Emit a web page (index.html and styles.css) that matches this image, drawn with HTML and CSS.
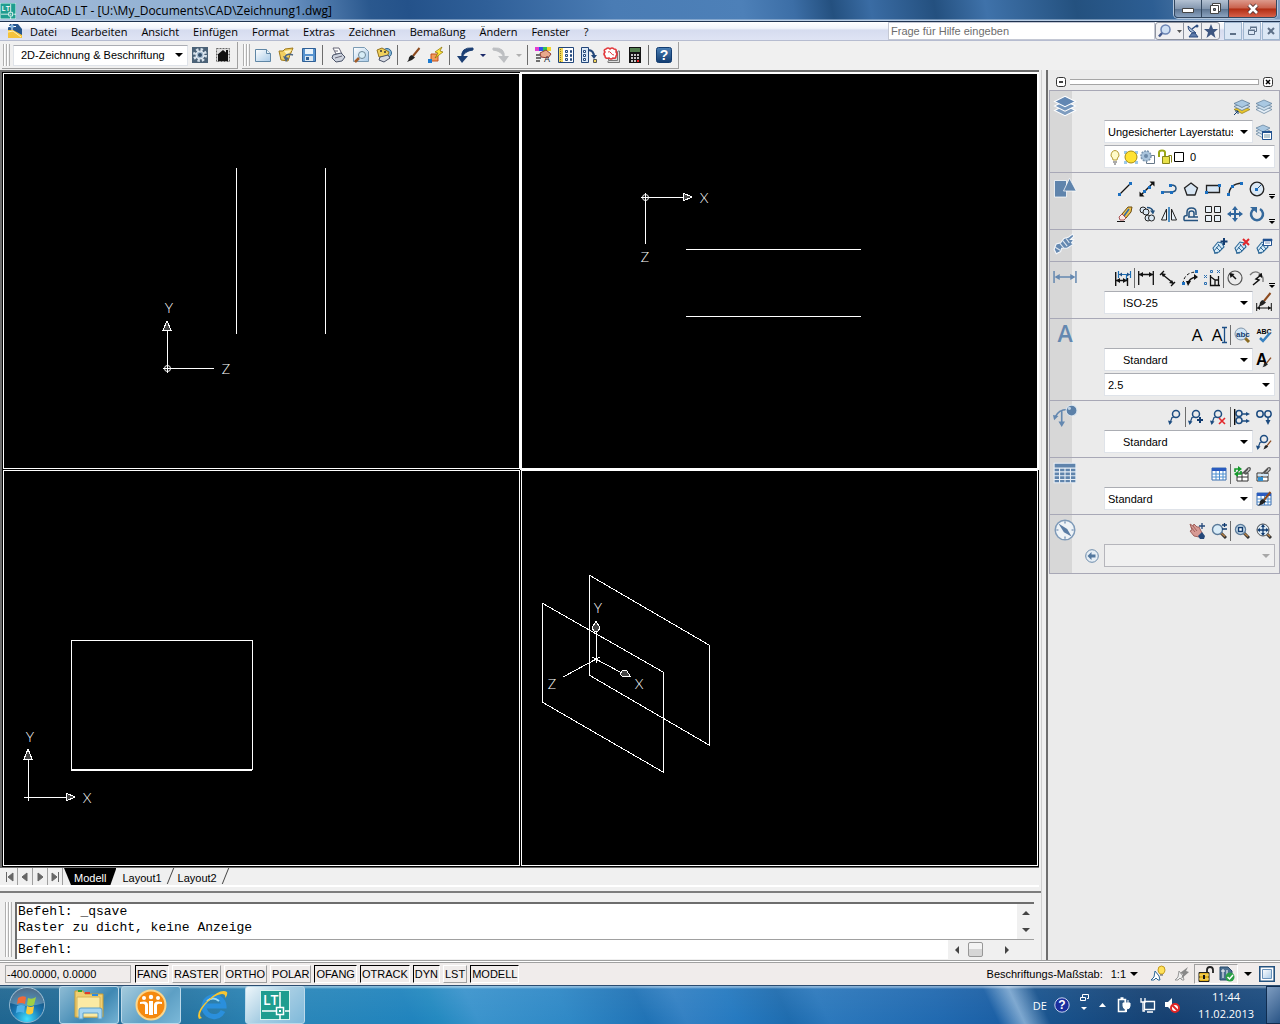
FILE: index.html
```html
<!DOCTYPE html>
<html lang="de">
<head>
  <meta charset="UTF-8">
  <meta name="viewport" content="width=device-width, initial-scale=1.0">
  <title>AutoCAD LT - Zeichnung1.dwg</title>
  <link rel="stylesheet" href="styles.css">
</head>
<body>
  <!-- shared icon parts -->
  <svg class="defs" aria-hidden="true">
    <defs>
      <linearGradient id="paper" x1="0" y1="0" x2="1" y2="1"><stop offset="0" stop-color="#fff"/><stop offset="1" stop-color="#a9cbe8"/></linearGradient>
      <radialGradient id="orb" cx=".5" cy=".9" r=".9"><stop offset="0" stop-color="#3fe0ff"/><stop offset=".45" stop-color="#1a78b4"/><stop offset="1" stop-color="#12385c"/></radialGradient>
      <linearGradient id="steel" x1="0" y1="0" x2="0" y2="1"><stop offset="0" stop-color="#4a7fb5"/><stop offset="1" stop-color="#123c70"/></linearGradient>
      <symbol id="layers" viewBox="0 0 16 16">
        <path d="M8 7.5 15 11 8 14.5 1 11z" fill="#7f9dbf" stroke="#fff" stroke-width=".7"/>
        <path d="M8 4.5 15 8 8 11.500 1 8z" fill="#7496bd" stroke="#fff" stroke-width=".7"/>
        <path d="M8 1.500 15 5 8 8.500 1 5z" fill="#6287b3" stroke="#fff" stroke-width=".7"/>
      </symbol>
      <symbol id="leader" viewBox="0 0 16 16">
        <circle cx="10" cy="5" r="3.500" fill="none" stroke="#1d4c80" stroke-width="1.500"/>
        <path d="M8 8 6 8.500 4 14" fill="none" stroke="#1d4c80" stroke-width="1.200"/>
        <path d="M2 11.500 6.500 12.500 3.500 16z" fill="#1d4c80"/>
      </symbol>
      <symbol id="lens" viewBox="0 0 16 16">
        <path d="M10 10 15 15" stroke="#333" stroke-width="3"/>
        <path d="M10 10 14 13.500" stroke="#b98347" stroke-width="1.500"/>
        <circle cx="6.500" cy="6.500" r="5" fill="#d9ecf8" stroke="#5b7a99" stroke-width="1.400"/>
      </symbol>
      <symbol id="brush" viewBox="0 0 16 16">
        <path d="M14.500 1 8 9" stroke="#8c4a1e" stroke-width="2"/>
        <path d="M7 8 10 10.500Q7 14 2 15 4 13 4 10.500 5 8 7 8z" fill="#222"/>
      </symbol>
      <symbol id="leaf" viewBox="0 0 16 16">
        <path d="M1 10l5-6 4 1 2 4-5 5-4 1z" fill="#d7ebf8" stroke="#2c6796" stroke-width="1.100"/>
        <path d="M2 13l5-6M4 9l4 4M6 6l4 5M2 15h4" stroke="#2c6796"/>
      </symbol>
      <symbol id="grid" viewBox="0 0 16 16">
        <path d="M1 2h14v12H1z" fill="#fff" stroke="#3a6eb0"/>
        <path d="M1 2h14v3H1z" fill="#2a5bbf"/>
        <path d="M1 8h14M1 11h14M5 5v9M8.500 5v9M12 5v9" stroke="#4c8fd0"/>
      </symbol>
      <symbol id="clip" viewBox="0 0 16 16">
        <path d="M1 7h11v8H1zM1 11h11M6 7v8" fill="#fff" stroke="#333"/>
        <path d="M7 7 12 2q3-1 2 2l-4 4q-2 0-1-2l3-3" fill="none" stroke="#555" stroke-width="1.300"/>
      </symbol>
      <symbol id="ltlogo" viewBox="0 0 30 30">
        <path d="M0 0h30v30H0z" fill="#1f9d8f"/>
        <path d="M0 0h30v30H0z" fill="none" stroke="#d9f5f0" stroke-width="2"/>
        <path d="M20 2v15M2 21h15M20 25v5M25 21h5M16.500 17.500h7v7h-7z" fill="none" stroke="#fff" stroke-width="1.500"/>
        <path d="M19 20h2v2h-2z" fill="#fff"/>
        <text x="3" y="15" font-size="14" font-family="Open Sans, sans-serif" font-weight="600" fill="#fff">LT</text>
      </symbol>
    </defs>
  </svg>

  <header class="titlebar">
    <svg class="app-icon" viewBox="0 0 30 30" aria-hidden="true"><use href="#ltlogo"/></svg>
    <h1 class="title">AutoCAD LT - [U:\My_Documents\CAD\Zeichnung1.dwg]</h1>
    <div class="window-buttons">
      <button class="win-btn" aria-label="Minimieren"><svg width="14" height="12"><path d="M1.500 5.500h11v4h-11z" fill="#fff" stroke="#444"/></svg></button>
      <button class="win-btn" aria-label="Wiederherstellen"><svg width="14" height="14"><path d="M4.500 1.500h8v8h-8z" fill="#fff" stroke="#444"/><path d="M2.500 3.500h8v8h-8z" fill="#fff" stroke="#444"/><path d="M5.500 6.500h2v2h-2z" fill="#6d87a8" stroke="#444"/></svg></button>
      <button class="win-btn win-close" aria-label="Schließen"><svg width="14" height="12"><path d="M3 2 11 10M11 2 3 10" stroke="#533" stroke-width="4.500"/><path d="M3 2 11 10M11 2 3 10" stroke="#fff" stroke-width="2.600"/></svg></button>
    </div>
  </header>

  <nav class="menubar">
    <svg class="doc-icon" width="16" height="16" aria-hidden="true"><path d="M3 1h8l4 5v9H1V5z" fill="#24548c"/><path d="M1 7l5 0 9 5v3H1z" fill="#f5c33b"/><path d="M1 9l5-1 8 6" fill="none" stroke="#fff2b8"/><path d="M5 0v7M1 3.500h8" stroke="#fff"/><path d="M3.500 2h3v3h-3z" fill="#7fb4e0"/></svg>
    <button class="menu">Datei</button>
    <button class="menu">Bearbeiten</button>
    <button class="menu">Ansicht</button>
    <button class="menu">Einfügen</button>
    <button class="menu">Format</button>
    <button class="menu">Extras</button>
    <button class="menu">Zeichnen</button>
    <button class="menu">Bemaßung</button>
    <button class="menu">Ändern</button>
    <button class="menu">Fenster</button>
    <button class="menu">?</button>
    <input class="help-input" type="text" placeholder="Frage für Hilfe eingeben" aria-label="Frage für Hilfe eingeben">
    <div class="help-buttons">
      <button class="help-btn help-wide" aria-label="Suchen"><svg width="26" height="14"><path d="M6 8 2 12.500" stroke="#44588c" stroke-width="2.500"/><circle cx="8.500" cy="5.500" r="4.500" fill="#cfe0f4" stroke="#6b84b4" stroke-width="1.500"/><path d="M20 6h5l-2.500 3z" fill="#555"/></svg></button>
      <button class="help-btn" aria-label="Kommunikations-Center"><svg width="14" height="14"><path d="M2 2q0 7 8 7z" fill="#a8bdd8" stroke="#2d4d80"/><path d="M6 5l4-3" stroke="#2d4d80" stroke-width="1.500"/><circle cx="11" cy="2" r="1.500" fill="#2d4d80"/><path d="M6 9l-3 4h9l-3-4z" fill="#5d7bab" stroke="#2d4d80"/></svg></button>
      <button class="help-btn" aria-label="Favoriten"><svg width="14" height="14"><path d="M7 0l2 5h5l-4 3.500 1.500 5.500L7 10.500 2.500 14 4 8.500 0 5h5z" fill="#3d5580"/></svg></button>
    </div>
    <div class="doc-buttons">
      <button class="doc-btn" aria-label="Zeichnung minimieren"><svg width="12" height="12"><path d="M3 9h6" stroke="#5d7088" stroke-width="2"/></svg></button>
      <button class="doc-btn" aria-label="Zeichnung wiederherstellen"><svg width="12" height="12"><path d="M4.500 4V2.500h6v4H9M2.500 5.500h6v4h-6zM4 2h7M2 5h7" fill="none" stroke="#5d7088"/></svg></button>
      <button class="doc-btn" aria-label="Zeichnung schließen"><svg width="12" height="12"><path d="M3 3l6 6M9 3 3 9" stroke="#5d7088" stroke-width="2"/></svg></button>
    </div>
  </nav>

  <div class="toolbars">
    <div class="toolbar">
      <span class="grip"></span>
      <span class="combo combo-workspace"><select aria-label="Arbeitsbereich"><option>2D-Zeichnung &amp; Beschriftung</option></select></span>
      <button class="tool" aria-label="Einstellungen"><svg width="16" height="16"><path d="M0 0h16v16H0z" fill="#4b6277"/><circle cx="8" cy="8" r="5.500" fill="none" stroke="#d7e2ec" stroke-width="3" stroke-dasharray="2.300 2"/><circle cx="8" cy="8" r="4" fill="#a8bed2" stroke="#e8eef4"/><circle cx="8" cy="8" r="2" fill="#34506c"/></svg></button>
      <button class="tool" aria-label="Mein Arbeitsbereich"><svg width="16" height="16"><path d="M1.500 1.500h13v13h-13z" fill="#ddd" stroke="#666" stroke-dasharray="2 1"/><path d="M8 3l6 5h-1v6H3V8H2zM11 3h2v4h-2z" fill="#111"/></svg></button>
    </div>
    <div class="toolbar">
      <span class="grip"></span>
      <button class="tool" aria-label="Neu"><svg width="16" height="16"><path d="M.5 2.500h11l4 4v8H.5z" fill="url(#paper)" stroke="#5f86a5"/><path d="M11.500 2.500v4h4" fill="#e9f3fa" stroke="#5f86a5"/></svg></button>
      <button class="tool" aria-label="Öffnen"><svg width="16" height="16"><path d="M1 4l4 0 2-2 8-1-3 7-2 6-7-1z" fill="#f2cf60" stroke="#a07a1c"/><path d="M6 4l8-1-5 5z" fill="#fff3bd"/><path d="M15 8q-6-2-8 2" fill="none" stroke="#4d6785" stroke-width="1.500"/><path d="M5 9l6 2-3 4z" fill="#4d6785"/></svg></button>
      <button class="tool" aria-label="Speichern"><svg width="16" height="16"><path d="M1.500 1.500h13v13h-13z" fill="#5793cf" stroke="#2f5f95"/><path d="M4 2h8v5H4z" fill="#e9f3fb"/><path d="M4 9h8v5H4z" fill="#dbe7f1"/><path d="M5 10h3v3H5z" fill="#2f5f95"/></svg></button>
      <span class="sep"></span>
      <button class="tool" aria-label="Plotten"><svg width="16" height="16"><path d="M3 1h6l3 6H6z" fill="#fff" stroke="#667"/><path d="M3 8l8-2 4 4-3 4-6 1-4-4z" fill="#cdd3de" stroke="#4a5368"/><path d="M5 11l7-2M5 4h3" stroke="#667"/></svg></button>
      <button class="tool" aria-label="Plot-Voransicht"><svg width="16" height="16"><path d="M.5.500h11l4 4v10H.5z" fill="url(#paper)" stroke="#7b9bb4"/><path d="M6 11l-4 4" stroke="#a35c28" stroke-width="2.500"/><circle cx="9" cy="8" r="3.500" fill="#d7edf7" stroke="#6d8797"/></svg></button>
      <button class="tool" aria-label="Publizieren"><svg width="16" height="16"><circle cx="11" cy="6" r="4.500" fill="#86b9d9" stroke="#30658e"/><path d="M1 3l5-2 7 4-2 5-8 0z" fill="#efd05c" stroke="#95731d"/><path d="M4 10l8-2 2 3-6 4-5-2z" fill="#d5d9e2" stroke="#4a5368"/><path d="M4 4h2M8 5h2" stroke="#333" stroke-width="1.500"/></svg></button>
      <span class="sep"></span>
      <button class="tool" aria-label="Eigenschaften anpassen"><svg width="16" height="16"><use href="#brush"/></svg></button>
      <button class="tool" aria-label="Blockeditor"><svg width="16" height="16"><path d="M3 7h7v7H3z" fill="#f19a5b" stroke="#c2501e"/><path d="M14 0 7 5l3 1-3 5 8-6-3-1z" fill="#ffe93d" stroke="#8a6f00" stroke-width=".7"/><path d="M0 12h4v4H0z" fill="#1b7bd1"/></svg></button>
      <span class="sep"></span>
      <button class="tool" aria-label="Zurück"><svg width="16" height="16"><path d="M16 1Q3 0 5 11 7 4 16 3z" fill="#1c3f73" stroke="#1c3f73"/><path d="M0 9h11l-6 7z" fill="#1c3f73"/></svg></button>
      <button class="drop" aria-label="Zurück-Liste"></button>
      <button class="tool" aria-label="Wiederherstellen" disabled><svg width="16" height="16"><path d="M0 1q13-1 11 10Q9 4 0 3z" fill="#bdbfc2" stroke="#bdbfc2"/><path d="M16 9H5l6 7z" fill="#bdbfc2"/></svg></button>
      <button class="drop" aria-label="Wiederherstellen-Liste" disabled></button>
      <span class="sep"></span>
      <button class="tool" aria-label="Eigenschaften"><svg width="16" height="16"><path d="M0 0h4v4H0z" fill="#e23bd2"/><path d="M4 0h4v4H4z" fill="#2f52e8"/><path d="M8 0h4v4H8z" fill="#2fc25b"/><path d="M12 0h4v4h-4z" fill="#f4d52c"/><path d="M5 6l6-3 5 4-3 4-7-1z" fill="#e9a98d" stroke="#8f3b35"/><path d="M1 8h4M1 11h5M1 14h4" stroke="#444" stroke-width="1.500"/><text x="9" y="15" font-size="9" font-family="Liberation Sans, sans-serif" fill="#123">A</text></svg></button>
      <button class="tool" aria-label="DesignCenter"><svg width="16" height="16"><path d="M.5.5h15v15H.5z" fill="#fff" stroke="#22467a"/><path d="M1 1h4v14H1z" fill="#f3d758"/><path d="M2.500 2v13" stroke="#927a1a" stroke-dasharray="1 1"/><path d="M7.500 3.500h2v2h-2zM12.500 3.500h1v2h-1zM7.500 7.500h2v2h-2zM12.500 7.500h1v2h-1zM7.500 11.500h2v2h-2zM12.500 11.500h1v2h-1z" fill="#dfeaf6" stroke="#22467a"/></svg></button>
      <button class="tool" aria-label="Werkzeugpaletten"><svg width="16" height="16"><path d="M.5.500h7v15h-7z" fill="#dce9f6" stroke="#22467a"/><path d="M2.500 3.500h2v2h-2zM2.500 7.500h2v2h-2zM2.500 11.500h2v2h-2z" fill="#fff" stroke="#22467a"/><path d="M7 3q6 0 6 7" fill="none" stroke="#22467a" stroke-width="2"/><path d="M10 8h6l-3 4z" fill="#22467a"/><path d="M12.500 12.500h3v3h-3z" fill="#f3d758" stroke="#555"/></svg></button>
      <button class="tool" aria-label="Markierungssatz-Manager"><svg width="16" height="16"><path d="M4.500 4.500h9v9h-9zM14 4h1.500v11.500H4V14" fill="#ddd" stroke="#777"/><path d="M2 2q2-2 4 0 2-2 4 0 3 0 2 3 2 2 0 4 0 3-3 2-2 2-4 0-4 1-4-2-2-2 0-4-2-2 1-3z" fill="#fff" stroke="#e2393d" stroke-width="1.600"/><path d="M4 5q2-1 3 1t3 2" fill="none" stroke="#e2393d"/></svg></button>
      <button class="tool" aria-label="Taschenrechner"><svg width="16" height="16"><path d="M2 0h12v16H2z" fill="#141414"/><path d="M3 1h10v4H3z" fill="#54804f"/><path d="M4 8h8M4 11h8M4 14h8" stroke="#fff" stroke-width="1.500" stroke-dasharray="2 1"/><path d="M10 14h2" stroke="#e22" stroke-width="2"/></svg></button>
      <span class="sep"></span>
      <button class="tool" aria-label="Hilfe"><svg width="16" height="16"><rect x=".5" y=".5" width="15" height="15" rx="2" fill="url(#steel)" stroke="#123c70"/><text x="8" y="13" font-size="14" font-weight="bold" font-family="Liberation Sans, sans-serif" text-anchor="middle" fill="#fff">?</text></svg></button>
    </div>
  </div>

  <main class="workspace">
    <div class="document">
      <div class="drawing">
        <div class="viewport">
          <svg role="img" aria-label="Seitenansicht">
            <path d="M232 94v166M321 94v166M163 299V256M159 294h51"/>
            <path class="arrow" d="M163 247l4 9h-8z"/>
            <circle class="origin" cx="163.500" cy="294.500" r="3"/>
            <text x="165" y="239">Y</text><text x="222" y="300">Z</text>
          </svg>
        </div>
        <div class="viewport active">
          <svg role="img" aria-label="Ansicht von oben">
            <path d="M164 175h175M164 242h175M119 123h43M123 119v51"/>
            <path class="arrow" d="M170 123l-9-4v8z"/>
            <circle class="origin" cx="123.500" cy="123.500" r="3"/>
            <text x="182" y="129">X</text><text x="123" y="188">Z</text>
          </svg>
        </div>
        <div class="viewport">
          <svg role="img" aria-label="Vorderansicht">
            <path d="M67 169h181v129H67zM67 299h181M20 326h42M24 330V288"/>
            <path class="arrow" d="M24 278l4 10h-8zM71 326l-9-4v8z"/>
            <text x="26" y="271">Y</text><text x="83" y="332">X</text>
          </svg>
        </div>
        <div class="viewport">
          <svg role="img" aria-label="Isometrische Ansicht">
            <path d="M67 104l120 70v100l-120-70zM20 132l121 69v100L20 231zM74 192V160M41 206l37-20M70 186l28 15"/>
            <path class="arrow" d="M74 150l4 7-2 3h-4l-2-3zM98 203l3-4 4 1 3 5h-8z"/>
            <text x="76" y="142">Y</text><text x="30" y="218">Z</text><text x="117" y="218">X</text>
          </svg>
        </div>
      </div>

      <div class="tabs">
        <button class="tab-nav" aria-label="Erster"><svg width="10" height="10"><path d="M1.500 0v10M8 1v8L3 5z"/></svg></button>
        <button class="tab-nav" aria-label="Vorheriger"><svg width="10" height="10"><path d="M7 1v8L2 5z"/></svg></button>
        <button class="tab-nav" aria-label="Nächster"><svg width="10" height="10"><path d="M3 1v8l5-4z"/></svg></button>
        <button class="tab-nav" aria-label="Letzter"><svg width="10" height="10"><path d="M8.500 0v10M2 1v8l5-4z"/></svg></button>
        <button class="tab tab-active">Modell</button>
        <button class="tab">Layout1</button>
        <button class="tab">Layout2</button>
      </div>

      <section class="command" aria-label="Befehlszeile">
        <span class="grip"></span>
        <div class="command-box">
          <div class="history">
            <div class="history-text">
              <p>Befehl: _qsave</p>
              <p>Raster zu dicht, keine Anzeige</p>
            </div>
            <div class="vscroll">
              <button aria-label="Nach oben"><svg width="8" height="4"><path d="M0 4h8L4 0z"/></svg></button>
              <button aria-label="Nach unten"><svg width="8" height="4"><path d="M0 0h8L4 4z"/></svg></button>
            </div>
          </div>
          <div class="prompt">
            <label for="befehl">Befehl:</label>
            <input type="text" id="befehl">
            <div class="hscroll">
              <button aria-label="Nach links"><svg width="4" height="8"><path d="M4 0v8L0 4z"/></svg></button>
              <span class="thumb"></span>
              <button aria-label="Nach rechts"><svg width="4" height="8"><path d="M0 0v8l4-4z"/></svg></button>
            </div>
          </div>
        </div>
      </section>
    </div>

    <aside class="palette">
      <div class="palette-head">
        <button class="round-btn" aria-label="Einklappen"><svg width="10" height="10"><rect x=".5" y=".5" width="9" height="9" rx="2" fill="#fff" stroke="#333"/><path d="M3 5h4" stroke="#000" stroke-width="1.500"/></svg></button>
        <span class="palette-grip"></span>
        <button class="round-btn" aria-label="Schließen"><svg width="10" height="10"><rect x=".5" y=".5" width="9" height="9" rx="2" fill="#fff" stroke="#333"/><path d="M3 3l4 4M7 3 3 7" stroke="#000" stroke-width="1.500"/></svg></button>
      </div>

      <div class="panels">
        <section class="panel" aria-label="Layer">
          <svg class="panel-icon" viewBox="0 0 16 16"><use href="#layers"/></svg>
          <div class="panel-rows">
            <div class="row">
              <button class="pbtn" aria-label="Objektlayer als aktuell"><svg width="16" height="16"><path d="M8 7l8 3.500-8 4-8-4z" fill="#e8c52c" stroke="#8e7a18" stroke-width=".7"/><path d="M8 4l8 3.500-8 4-8-4z" fill="#cfe0ee" stroke="#4f6f8c" stroke-width=".7"/><path d="M8 1l8 3.500-8 4-8-4z" fill="#a9c8e2" stroke="#4f6f8c" stroke-width=".7"/><path d="M0 16l4-4M1 12h3v3" fill="none" stroke="#123c70"/></svg></button>
              <button class="pbtn" aria-label="Layer vorher"><svg width="16" height="16"><path d="M8 7l8 3.500-8 4-8-4z" fill="#e4eef6" stroke="#5f7c98" stroke-width=".7"/><path d="M8 4l8 3.500-8 4-8-4z" fill="#cfe0ee" stroke="#5f7c98" stroke-width=".7"/><path d="M8 1l8 3.500-8 4-8-4z" fill="#a9c8e2" stroke="#5f7c98" stroke-width=".7"/></svg></button>
            </div>
            <div class="row">
              <span class="combo"><select aria-label="Layerstatus"><option>Ungesicherter Layerstatus</option></select></span>
              <button class="pbtn" aria-label="Layereigenschaften"><svg width="16" height="16"><path d="M7 7l7 3-7 4-7-4z" fill="#e4eef6" stroke="#5f7c98" stroke-width=".7"/><path d="M7 4l7 3-7 4-7-4z" fill="#cfe0ee" stroke="#5f7c98" stroke-width=".7"/><path d="M7 1l7 3-7 4-7-4z" fill="#a9c8e2" stroke="#5f7c98" stroke-width=".7"/><path d="M6.500 7.500h9v8h-9z" fill="#fff" stroke="#225390"/><path d="M6 7h10v2H6z" fill="#225390"/><path d="M8 11h6M8 13h6" stroke="#79a"/></svg></button>
            </div>
            <div class="row">
              <span class="combo combo-layer">
                <svg width="76" height="16" aria-hidden="true">
                  <path d="M5 11q0-2-2-4 0-5 4-5.500 4 .500 4 5.500-2 2-2 4z" fill="#fffbc8" stroke="#b49a32"/><path d="M5 13h4M6 15h2" stroke="#555"/>
                  <path d="M16 2h3v3h-3zM27 2h3v3h-3zM16 12h3v3h-3zM27 12h3v3h-3z" fill="#9cc9ec"/><circle cx="23" cy="8" r="6" fill="#ffe233" stroke="#a88c10"/>
                  <path d="M38.500 6.500h8v8h-8z" fill="#fff" stroke="#678"/><circle cx="38" cy="7" r="5" fill="#a9c4dc" stroke="#7b96b0" stroke-width="1.500" stroke-dasharray="2 1"/><circle cx="38" cy="7" r="2" fill="#6b89a8"/>
                  <path d="M51 8V3.500q0-2 3-2t3 2V7" fill="none" stroke="#9aa615" stroke-width="2"/><path d="M54.500 7.500h7v7h-7z" fill="#e8e14a" stroke="#86841a"/><path d="M60.500 6.500h3v7" fill="none" stroke="#86841a"/>
                  <path d="M66.500 3.500h9v9h-9z" fill="#fff" stroke="#000"/>
                </svg>
                <select aria-label="Layer"><option>0</option></select>
              </span>
            </div>
          </div>
        </section>

        <section class="panel" aria-label="2D-Zeichnung">
          <svg class="panel-icon" viewBox="0 0 16 16"><path d="M1 3h8v11H1z" fill="#5f84ac" stroke="#fff" stroke-width=".5"/><path d="M11 1.500 15.500 10H7z" fill="#5f84ac" stroke="#fff" stroke-width=".5"/></svg>
          <div class="panel-rows">
            <div class="row">
              <button class="pbtn" aria-label="Linie"><svg width="16" height="16"><path d="M2 14 14 2" stroke="#111" stroke-width="1.300"/><path class="node" d="M1 12h3v3H1zM12 1h3v3h-3z"/></svg></button>
              <button class="pbtn" aria-label="Konstruktionslinie"><svg width="16" height="16"><path d="M2 14 14 2" stroke="#111" stroke-width="1.500"/><path d="M15.500 .5v5l-5-5zM.5 15.500v-5l5 5z" fill="#111"/><path class="node" d="M4 9h3v3H4zM9 5h3v3H9z"/></svg></button>
              <button class="pbtn" aria-label="Polylinie"><svg width="16" height="16"><path d="M1 11h9q5 0 5-3.500T10 4" fill="none" stroke="#24527f" stroke-width="1.500"/><path class="node" d="M0 10h3v3H0zM9 10h3v3H9zM8 3h3v3H8z"/></svg></button>
              <button class="pbtn" aria-label="Polygon"><svg width="16" height="16"><path d="M8 2l6.500 5-2.500 7H4L1.500 7z" fill="#d8e6f3" stroke="#222" stroke-width="1.300"/></svg></button>
              <button class="pbtn" aria-label="Rechteck"><svg width="16" height="16"><path d="M1.500 4.500h13v7h-13z" fill="#d8e6f3" stroke="#222" stroke-width="1.300"/><path class="node" d="M0 10h3v3H0zM13 3h3v3h-3z"/></svg></button>
              <button class="pbtn" aria-label="Bogen"><svg width="16" height="16"><path d="M2 14Q2 3 15 2" fill="none" stroke="#222" stroke-width="1.300"/><path class="node" d="M0 12h3v3H0zM4 4h3v3H4zM13 1h3v3h-3z"/></svg></button>
              <button class="pbtn" aria-label="Kreis"><svg width="16" height="16"><circle cx="8" cy="8" r="6.800" fill="#dbe8f4" stroke="#222" stroke-width="1.300"/><path d="M8 8l4-4" stroke="#24527f"/><path class="node" d="M6 7h3v3H6z"/></svg></button>
              <button class="more" aria-label="Weitere Zeichenbefehle"></button>
            </div>
            <div class="row">
              <button class="pbtn" aria-label="Löschen"><svg width="16" height="16"><path d="M11 1h4l-1 5-5 6-4-4z" fill="#efc04a" stroke="#6b4d10"/><path d="M12 3l-5 7" stroke="#2d6cb0" stroke-width="1.500"/><path d="M5 8l4 4-2 2H3l-1-3z" fill="#fbe9e4" stroke="#a55"/><path d="M0 15.500h8" stroke="#111"/></svg></button>
              <button class="pbtn" aria-label="Kopieren"><svg width="16" height="16"><g fill="#dbe8f4" stroke="#222"><circle cx="4" cy="4" r="3"/><circle cx="7" cy="6" r="3"/><circle cx="9" cy="12" r="3"/><circle cx="12.500" cy="12" r="3"/></g><path d="M8 1.500q5 0 6 4" fill="none" stroke="#24527f" stroke-width="1.500"/><path d="M11 4.500h5l-2 4z" fill="#24527f"/></svg></button>
              <button class="pbtn" aria-label="Spiegeln"><svg width="16" height="16"><path d="M5.500 3v11H.5zM10.500 3v11h5z" fill="#e9f1f8" stroke="#222"/><path d="M8 1v15" stroke="#1b6fb5" stroke-width="1.500"/></svg></button>
              <button class="pbtn" aria-label="Versetzen"><svg width="16" height="16"><path d="M1 14.500h14M1 14.500v-3q0-2 3-2V6q0-4 4.500-4T13 6v3M5 11h10M6 11V7q0-2 2.500-2T11 7v4" fill="none" stroke="#24527f" stroke-width="1.500"/></svg></button>
              <button class="pbtn" aria-label="Reihe"><svg width="16" height="16"><path d="M.5.500h6v6h-6zM9.500.500h6v6h-6zM.5 9.500h6v6h-6zM9.500 9.500h6v6h-6z" fill="#e9f1f8" stroke="#222"/></svg></button>
              <button class="pbtn" aria-label="Schieben"><svg width="16" height="16"><path d="M8 2v12M2 8h12" stroke="#2f659c" stroke-width="2"/><path d="M8 0l3 4H5zM8 16l3-4H5zM0 8l4-3v6zM16 8l-4-3v6z" fill="#2f659c"/></svg></button>
              <button class="pbtn" aria-label="Drehen"><svg width="16" height="16"><path d="M5 3A6 6 0 1 0 11 3" fill="none" stroke="#35699c" stroke-width="2.500"/><path d="M1 1h7v6z" fill="#35699c"/></svg></button>
              <button class="more" aria-label="Weitere Änderungsbefehle"></button>
            </div>
          </div>
        </section>

        <section class="panel" aria-label="Beschriftungs-Skalierung">
          <svg class="panel-icon" viewBox="0 0 22 22"><path d="M1 15l2-5 4-1 3-4 4-1 4-3 1 2-3 3 3 0-2 3 2 1-3 2-3 2-5 0-1 3-4 2z" fill="#6488b0" stroke="#f4f7fa"/><path d="M2 13l5 3M6 9l4 5M9 7l4 5M12 5l3 4" stroke="#dfe8f1"/></svg>
          <div class="panel-rows">
            <div class="row">
              <button class="pbtn" aria-label="Maßstab hinzufügen"><svg width="16" height="16"><use href="#leaf"/><path d="M12 0v7M8.500 3.500h7" stroke="#123c70" stroke-width="2"/></svg></button>
              <button class="pbtn" aria-label="Maßstab löschen"><svg width="16" height="16"><use href="#leaf"/><path d="M9 1l6 6M15 1 9 7" stroke="#e2262a" stroke-width="2"/></svg></button>
              <button class="pbtn" aria-label="Maßstabsliste"><svg width="16" height="16"><use href="#leaf"/><path d="M7.500 1.500h8v6h-8z" fill="#fff" stroke="#225390"/><path d="M7 1h9v2H7zM9 5h5" fill="#225390" stroke="#225390" stroke-width=".6"/></svg></button>
            </div>
          </div>
        </section>

        <section class="panel" aria-label="Bemaßungen">
          <svg class="panel-icon" viewBox="0 0 16 16"><path d="M.7 4v8M15.300 4v8M2 8h12" stroke="#6488b0"/><path d="M1 8l3.500-2v4zM15 8l-3.500-2v4z" fill="#6488b0"/></svg>
          <div class="panel-rows">
            <div class="row">
              <button class="pbtn" aria-label="Schnellbemaßung"><svg width="16" height="16"><path d="M3.500 1v7M15.500 1v7M3.500 4.500h12M11.500 5v6" stroke="#1c6fb6" stroke-width="1.200"/><path d="M4 4.500l3-2v4zM15 4.500l-3-2v4z" fill="#1c4f86"/><path d="M.7 2v14M12.500 8v8M1 10.500h12" stroke="#111" stroke-width="1.400"/><path d="M1 10.500l4-2.500v5zM12 10.500l-4-2.500v5z" fill="#111"/></svg></button>
              <span class="sep"></span>
              <button class="pbtn" aria-label="Linear"><svg width="16" height="16"><path d="M.7 1v14M15.300 1v14M1 4.500h14" stroke="#111" stroke-width="1.300"/><path d="M1 4.500l4-2.500v5zM15 4.500l-4-2.500v5z" fill="#111"/></svg></button>
              <button class="pbtn" aria-label="Ausgerichtet"><svg width="16" height="16"><path d="M0 5l4-4M11 16l4-4M2 4l11 9" stroke="#111" stroke-width="1.300"/><path d="M1 3l5 1-3 3zM14 14l-5-1 3-3z" fill="#111"/></svg></button>
              <button class="pbtn" aria-label="Bogenlänge"><svg width="16" height="16"><path d="M1 14Q2 2 15 2" fill="none" stroke="#111" stroke-dasharray="3 2"/><path d="M6 14q1-6 8-7" fill="none" stroke="#111" stroke-width="1.500"/><path d="M4 11h5l-3 5zM12 4l4 3-4 3z" fill="#111"/><path class="node" d="M0 12h3v3H0zM13 0h3v3h-3z"/></svg></button>
              <button class="pbtn" aria-label="Koordinate"><svg width="16" height="16"><path d="M6.500 5v10.500H16M7 7l4 3h4M14.500 6v9M11 10v5" fill="none" stroke="#111" stroke-width="1.300"/><path d="M0 5l3 3M3 5 0 8M.5 12.500h2v2h-2zM6.500 .5h2v2h-2zM13 0l3 3M16 0l-3 3" fill="none" stroke="#2c6fb0"/></svg></button>
              <span class="sep"></span>
              <button class="pbtn" aria-label="Radius"><svg width="16" height="16"><circle cx="8" cy="8" r="7" fill="none" stroke="#555" stroke-width="1.200"/><path d="M4 4l5 5" stroke="#111" stroke-width="1.500"/><path d="M2.500 3l5 1-4 4z" fill="#111"/></svg></button>
              <button class="pbtn" aria-label="Verkürzt"><svg width="16" height="16"><path d="M1 5q4-5 9-2t4 9" fill="none" stroke="#777" stroke-width="1.300"/><path d="M12 5 7 9l3 1-6 5" fill="none" stroke="#111" stroke-width="1.500"/><path d="M13 3l0 5-4-3z" fill="#111"/></svg></button>
              <button class="more" aria-label="Weitere Bemaßungen"></button>
            </div>
            <div class="row">
              <span class="combo indent"><select aria-label="Bemaßungsstil"><option>ISO-25</option></select></span>
              <button class="pbtn" aria-label="Bemaßungsstil bearbeiten"><svg width="16" height="16"><use href="#brush" y="-3" width="16" height="16"/><path d="M.7 8v8M15.300 8v8M1 13h14" stroke="#111"/><path d="M1 13l3-2v4zM15 13l-3-2v4z" fill="#111"/></svg></button>
            </div>
          </div>
        </section>

        <section class="panel" aria-label="Text">
          <svg class="panel-icon" viewBox="0 0 24 24"><text x="12" y="20" font-size="23" font-weight="600" font-family="Open Sans, sans-serif" text-anchor="middle" fill="#6488b0">A</text></svg>
          <div class="panel-rows">
            <div class="row">
              <button class="pbtn" aria-label="Absatztext"><svg width="16" height="16"><text x="8" y="14" font-size="17" font-family="Open Sans, sans-serif" text-anchor="middle">A</text></svg></button>
              <button class="pbtn" aria-label="Einzeiliger Text"><svg width="16" height="16"><text x="6" y="14" font-size="17" font-family="Open Sans, sans-serif" text-anchor="middle">A</text><path d="M13.500 1v14M11 .5h5M11 15.500h5" stroke="#1c4f86" stroke-width="1.300"/></svg></button>
              <span class="sep"></span>
              <button class="pbtn" aria-label="Text suchen"><svg width="16" height="16"><path d="M10 10l5 5" stroke="#8a6a20" stroke-width="3"/><circle cx="7" cy="7" r="6" fill="#cfe4f4" stroke="#8195a8"/><text x="2" y="10" font-size="8" font-weight="bold" font-family="Liberation Sans, sans-serif" fill="#123c70">abc</text></svg></button>
              <button class="pbtn" aria-label="Rechtschreibung"><svg width="16" height="16"><text x="8" y="7" font-size="7" font-weight="bold" font-family="Liberation Sans, sans-serif" text-anchor="middle">ABC</text><path d="M4 11l3 3 7-8" fill="none" stroke="#3781c0" stroke-width="2.500"/></svg></button>
            </div>
            <div class="row">
              <span class="combo indent"><select aria-label="Textstil"><option>Standard</option></select></span>
              <button class="pbtn" aria-label="Textstil bearbeiten"><svg width="16" height="16"><text x="0" y="13" font-size="16" font-weight="bold" font-family="Liberation Sans, sans-serif">A</text><use href="#brush" x="5" y="5" width="11" height="11"/></svg></button>
            </div>
            <div class="row">
              <span class="combo"><select aria-label="Texthöhe"><option>2.5</option></select></span>
            </div>
          </div>
        </section>

        <section class="panel" aria-label="Multi-Führungslinien">
          <svg class="panel-icon" viewBox="0 0 22 22"><path d="M2 12q3-7 11-7M8 6v12" fill="none" stroke="#6488b0" stroke-width="1.500"/><path d="M5 16h6l-3 5zM0 10l5 1-4 4z" fill="#6488b0"/><circle cx="17" cy="6" r="5" fill="#5b80a8" stroke="#dce6ef"/><circle cx="15" cy="4" r="1.500" fill="#bed0e2"/></svg>
          <div class="panel-rows">
            <div class="row">
              <button class="pbtn" aria-label="Multi-Führungslinie"><svg width="16" height="16"><use href="#leader"/></svg></button>
              <span class="sep"></span>
              <button class="pbtn" aria-label="Führungslinie hinzufügen"><svg width="16" height="16"><use href="#leader" x="-3" width="16" height="16"/><path d="M11 8v6M8 11h6" stroke="#123c70" stroke-width="2"/></svg></button>
              <button class="pbtn" aria-label="Führungslinie entfernen"><svg width="16" height="16"><use href="#leader" x="-3" width="16" height="16"/><path d="M8 9l6 6M14 9l-6 6" stroke="#e2262a" stroke-width="1.600"/></svg></button>
              <span class="sep"></span>
              <button class="pbtn" aria-label="Führungslinien ausrichten"><svg width="16" height="16"><g fill="none" stroke="#1d4c80" stroke-width="1.500"><circle cx="5" cy="4.500" r="3"/><circle cx="5" cy="11.500" r="3"/><path d="M8 5h5M8 12h5"/></g><path d="M.7 0v16" stroke="#000" stroke-width="1.300"/><path d="M12 3l4 2-4 2zM12 10l4 2-4 2z" fill="#1d4c80"/></svg></button>
              <button class="pbtn" aria-label="Führungslinien sammeln"><svg width="16" height="16"><g fill="none" stroke="#1d4c80" stroke-width="1.500"><circle cx="4" cy="5" r="3.200"/><circle cx="12" cy="5" r="3.200"/><path d="M12 8v5"/></g><path d="M9.500 11h5L12 16z" fill="#1d4c80"/></svg></button>
            </div>
            <div class="row">
              <span class="combo indent"><select aria-label="Führungslinienstil"><option>Standard</option></select></span>
              <button class="pbtn" aria-label="Führungslinienstil bearbeiten"><svg width="16" height="16"><use href="#leader" x="-2" width="16" height="16"/><use href="#brush" x="6" y="6" width="10" height="10"/></svg></button>
            </div>
          </div>
        </section>

        <section class="panel" aria-label="Tabellen">
          <svg class="panel-icon" viewBox="0 0 22 22"><path d="M1 2h20v18H1z" fill="#5f84ac" stroke="#e7eef5"/><path d="M1 6.500h20M1 10h20M1 13.500h20M1 17h20M6 6v14M11 6v14M16 6v14" stroke="#e7eef5"/></svg>
          <div class="panel-rows">
            <div class="row">
              <button class="pbtn" aria-label="Tabelle"><svg width="16" height="16"><use href="#grid"/></svg></button>
              <span class="sep"></span>
              <button class="pbtn" aria-label="Daten aktualisieren"><svg width="16" height="16"><use href="#clip" x="2" width="16" height="16"/><path d="M1 6V3h4M7 5v3H3" fill="none" stroke="#159a2c" stroke-width="1.600"/><path d="M4 0l4 3-4 3zM4 5v6L0 8z" fill="#159a2c"/></svg></button>
              <button class="pbtn" aria-label="Datenverknüpfung"><svg width="16" height="16"><use href="#clip" width="16" height="16"/><path d="M2 8h10v2H2z" fill="#cfe4f4"/><path d="M2 11h5v4H2z" fill="#2f8fd0"/></svg></button>
            </div>
            <div class="row">
              <span class="combo"><select aria-label="Tabellenstil"><option>Standard</option></select></span>
              <button class="pbtn" aria-label="Tabellenstil bearbeiten"><svg width="16" height="16"><use href="#grid"/><use href="#brush"/></svg></button>
            </div>
          </div>
        </section>

        <section class="panel" aria-label="2D-Navigation">
          <svg class="panel-icon" viewBox="0 0 22 22"><circle cx="11" cy="11" r="9" fill="#eef3f7" stroke="#7e9ab8" stroke-width="1.300"/><path d="M5 5l8 5 4 7-7-4z" fill="#5a7da5"/><path d="M11 3v2M11 17v2M3 11h2M17 11h2" stroke="#5a7da5"/></svg>
          <div class="panel-rows">
            <div class="row">
              <button class="pbtn" aria-label="Pan"><svg width="16" height="16"><path d="M1 1l3 2 1-2 3 3 2 0 3 6-3 4-5-1-4-5 2-1z" fill="#d79a94" stroke="#a0615c"/><path d="M2 4l4 5M4 3l4 5" stroke="#a0615c"/><path d="M9 13l4-4 3 4-1 3h-4z" fill="#24487a"/><path d="M13 0v6M10 3h6" stroke="#24487a" stroke-width="1.300"/></svg></button>
              <button class="pbtn" aria-label="Zoom Echtzeit"><svg width="16" height="16"><use href="#lens"/><path d="M11 2h5M13.500 0v4M11 6h5" stroke="#123c70" stroke-width="1.300"/></svg></button>
              <span class="sep"></span>
              <button class="pbtn" aria-label="Zoom Fenster"><svg width="16" height="16"><use href="#lens"/><path d="M4.500 4.500h4v4h-4z" fill="#fff" stroke="#123c70" stroke-width="1.500"/></svg></button>
              <button class="pbtn" aria-label="Zoom Grenzen"><svg width="16" height="16"><use href="#lens"/><circle cx="7" cy="7" r="6" fill="#dbe8f2" stroke="#555"/><path d="M7 3v8M3 7h8" stroke="#123c70" stroke-width="1.300"/><path d="M7 1l2 3H5zM7 13l2-3H5zM1 7l3-2v4zM13 7l-3-2v4z" fill="#123c70"/></svg></button>
            </div>
            <div class="row">
              <button class="back-btn" aria-label="Zurück"><svg width="14" height="14"><circle cx="7" cy="7" r="6.300" fill="#e6eef5" stroke="#6c8bab"/><path d="M2.500 7l4-4v2.500h4v3h-4V11z" fill="#54789f"/></svg></button>
              <span class="combo combo-off"><select aria-label="Ansichten" disabled><option></option></select></span>
            </div>
          </div>
        </section>
      </div>
    </aside>
  </main>

  <footer class="statusbar">
    <output class="coords">-400.0000, 0.0000</output>
    <div class="modes">
      <button class="mode on">FANG</button>
      <button class="mode">RASTER</button>
      <button class="mode">ORTHO</button>
      <button class="mode">POLAR</button>
      <button class="mode on">OFANG</button>
      <button class="mode on">OTRACK</button>
      <button class="mode on">DYN</button>
      <button class="mode">LST</button>
      <button class="mode on">MODELL</button>
    </div>
    <div class="status-right">
      <span>Beschriftungs-Maßstab:</span>
      <button class="scale-btn">1:1</button>
      <button class="pbtn" aria-label="Beschriftungssichtbarkeit"><svg width="16" height="16"><path d="M1 14l3-3 1-6 4 5 1 4H8l-2-2-2 2z" fill="#fff" stroke="#2c6796"/><path d="M8 4q0-4 3.500-4T15 4q0 2-2 4h-3q-2-2-2-4z" fill="#ffe15a" stroke="#c49b1c"/><path d="M10 9h3" stroke="#555"/></svg></button>
      <button class="pbtn" aria-label="Automatischer Maßstab"><svg width="16" height="16"><path d="M1 14l3-3 1-6 4 5 1 4H8l-2-2-2 2z" fill="#eee" stroke="#999"/><path d="M14 1 6 7l3 1-2 5 8-7-3-1z" fill="#888"/></svg></button>
      <span class="locks">
        <button class="pbtn" aria-label="Werkzeugkasten entsperrt"><svg width="16" height="16"><path d="M9 7V4q0-3 3-3t3 3v3" fill="none" stroke="#222" stroke-width="1.800"/><path d="M1 6.500h10v9H1z" fill="#e0b020" stroke="#222"/><path d="M1 9h10M1 13h10" stroke="#fbe27a"/><path d="M5 9h2v4H5z" fill="#111"/></svg></button>
        <button class="pbtn" aria-label="Fertig"><svg width="16" height="16"><path d="M1 1h8l4 4v9H1z" fill="#4b6f90" stroke="#274a6b"/><path d="M4 3v9M2 5h4M8 4v6" stroke="#fff"/><circle cx="11" cy="11" r="4.500" fill="#2aa045"/><path d="M8.500 11l2 2 3.500-4" fill="none" stroke="#fff" stroke-width="1.500"/></svg></button>
      </span>
      <button class="drop drop-status" aria-label="Statusleistenmenü"></button>
      <button class="pbtn" aria-label="Vollbild"><svg width="16" height="16"><path d="M.8.800h14.400v14.400H.8z" fill="#fff" stroke="#24527f" stroke-width="1.600"/><path d="M3.500 3.500h9v9h-9z" fill="url(#paper)" stroke="#6b93bb"/></svg></button>
    </div>
  </footer>

  <div class="taskbar">
    <button class="start" aria-label="Start"><svg width="38" height="38"><circle cx="19" cy="19" r="17.500" fill="url(#orb)" stroke="#8fb6cf"/><path d="M2 17a17 16 0 0 1 34 0q-17 6-34 0z" fill="#fff" opacity=".25"/><path d="M10 12q4-3 8-1l-1 7q-4-2-8 0z" fill="#ef6a3a"/><path d="M20 12q4 2 8-1l-2 8q-3 2-7 0z" fill="#9fcf45"/><path d="M9 20q4-2 8 0l-1 7q-4-2-8 0z" fill="#4fb2ea"/><path d="M19 20q4 2 7 0l-1 7q-4 3-7 0z" fill="#fbcb3c"/></svg></button>
    <button class="task" aria-label="Windows-Explorer"><svg width="34" height="32"><path d="M3 2h8l2 3h18v23H3z" fill="#f0cf72" stroke="#c79d35"/><path d="M5 8h23v20H5z" fill="#fbeaa4" stroke="#d6b458"/><path d="M6 2h4" stroke="#2aa336" stroke-width="2"/><path d="M13 4h5" stroke="#e03a2c" stroke-width="2"/><path d="M20 6h6" stroke="#2d8ae0" stroke-width="2"/><path d="M7 30v-9q0-2 2-2h19q2 0 2 2v9h-4v-6H11v6z" fill="#a7d6f2" stroke="#5aa0cc"/></svg></button>
    <button class="task task-warm" aria-label="Programm"><svg width="32" height="32"><circle cx="16" cy="16" r="14.500" fill="#f5890f" stroke="#fbd68c" stroke-width="2"/><g fill="#fff"><circle cx="9" cy="9" r="2"/><circle cx="16" cy="8" r="2.200"/><circle cx="23" cy="9" r="2"/></g><path d="M5 13q8-2 8 3v9h-3v-9q-1-2-5-1zM27 13q-8-2-8 3v9h3v-9q1-2 5-1zM14 12h4v14h-4z" fill="#fff"/></svg></button>
    <button class="task task-flat" aria-label="Internet Explorer"><svg width="34" height="34"><path d="M27 23A10 10 0 1 1 28 18H10" fill="none" stroke="#2a8fdc" stroke-width="5"/><path d="M11 13q6-5 12 0" fill="none" stroke="#9bdcfa" stroke-width="2"/><path d="M3 31Q-1 24 12 12T31 4q1 3-2 6 1-4-3-4Q17 7 9 17T6 30z" fill="#f7c531"/></svg></button>
    <button class="task task-bright" aria-label="AutoCAD LT"><svg width="30" height="30"><use href="#ltlogo"/></svg></button>
    <div class="tray">
      <span class="lang">DE</span>
      <button class="tray-btn" aria-label="Hilfe"><svg width="16" height="16"><circle cx="8" cy="8" r="7.200" fill="#1b2f9e" stroke="#c8d4ee"/><text x="8" y="12" font-size="12" font-weight="bold" font-family="Liberation Sans, sans-serif" text-anchor="middle" fill="#fff">?</text></svg></button>
      <button class="tray-btn tray-top" aria-label="Sprachleiste"><svg width="12" height="20"><path d="M4.500 4V1.500h6v4H9M2.500 4.500h5v3h-5z" fill="none" stroke="#fff"/><path d="M3 14h6l-3 3z" fill="#fff"/></svg></button>
      <button class="tray-btn" aria-label="Ausgeblendete Symbole"><svg width="10" height="6"><path d="M1 5h7L4.500 1z" fill="#fff"/></svg></button>
      <button class="tray-btn" aria-label="Energie"><svg width="16" height="16"><path d="M2.500 2.500h7v12h-7zM4.500 1h3" fill="#315b86" stroke="#fff" stroke-width="1.500"/><path d="M7 6h7v3q0 3-3.500 3T7 9zM9 3v3M12 3v3M10.500 12v3" fill="#fff" stroke="#fff"/></svg></button>
      <button class="tray-btn" aria-label="Netzwerk"><svg width="16" height="16"><path d="M4.500 4.500h10v8h-10z" fill="#244d78" stroke="#fff" stroke-width="1.300"/><path d="M7 15h6M1 1v4h4V1M3 5v9h2" fill="none" stroke="#fff" stroke-width="1.300"/></svg></button>
      <button class="tray-btn" aria-label="Lautsprecher"><svg width="16" height="16"><path d="M1 5h3l4-4v13l-4-4H1z" fill="#fff"/><circle cx="11" cy="11" r="4" fill="#fff" stroke="#e02525" stroke-width="2"/><path d="M8 8l6 6" stroke="#e02525" stroke-width="2"/></svg></button>
      <time class="clock" datetime="2013-02-11T11:44"><span>11:44</span><span>11.02.2013</span></time>
      <button class="show-desktop" aria-label="Desktop anzeigen"></button>
    </div>
  </div>
</body>
</html>
```
FILE: styles.css
```css
* {
  box-sizing: border-box;
}
body {
  margin: 0;
  min-height: 100vh;
  display: flex;
  flex-direction: column;
  background: #f0f0f0;
  color: #000;
  font-family: "Liberation Sans", Arial, sans-serif;
  font-size: 11px;
}
button {
  margin: 0;
  padding: 0;
  border: none;
  background: none;
  color: inherit;
  font: inherit;
}
input,
select {
  font: inherit;
  color: inherit;
}
svg {
  display: block;
  flex: none;
  overflow: visible;
}
p {
  margin: 0;
}
.defs {
  position: absolute;
  width: 0;
  height: 0;
}

/* title bar */
.titlebar {
  display: flex;
  align-items: center;
  height: 22px;
  border-bottom: 1px solid #1f3350;
  background:
    linear-gradient(to bottom, transparent 19px, #b9cde4 20px),
    linear-gradient(80deg, #a3bcd8 0%, #8fafd2 16%, #6f97c6 22%, #2a588e 29%, #24528a 32%, #2f5f98 38%, #4a7cb4 48%, #4d80b8 58%, #3c6ea6 62%, #24507f 65%, #3a6ca4 68%, #24507f 73%, #3f72aa 77%, #24517f 84%, #2d5e93 90%, #7f9fc4 100%);
}
.app-icon {
  width: 16px;
  height: 16px;
  flex: none;
}
.title {
  flex: 1;
  margin: 0 0 0 5px;
  font: 12px "Open Sans", sans-serif;
  white-space: nowrap;
}
.window-buttons {
  display: flex;
  align-self: flex-start;
  margin-right: 3px;
  border: 1px solid #33475f;
  border-top: none;
  border-radius: 0 0 4px 4px;
  overflow: hidden;
  box-shadow: 0 0 0 1px #b5c8de;
}
.win-btn {
  display: flex;
  align-items: center;
  justify-content: center;
  width: 27px;
  height: 17px;
  border-right: 1px solid #33475f;
  background: linear-gradient(#b4c2d3 0%, #8497af 50%, #5c738f 52%, #8ba3c0 100%);
}
.win-close {
  width: 47px;
  border-right: none;
  background: linear-gradient(#dd9a8c 0%, #c9604b 48%, #b02c12 52%, #d7614a 100%);
}

/* menu */
.menubar {
  display: flex;
  align-items: center;
  height: 19px;
  border-bottom: 1px solid #b6bcd0;
  background: linear-gradient(#fff 0%, #f1f4fb 35%, #d6dcef 45%, #dfe4f4 100%);
  font: 11px "Open Sans", sans-serif;
}
.doc-icon {
  margin: 0 0 0 7px;
}
.menu {
  padding: 0 7px;
}
.menu:hover {
  background: #c5d5f0;
}
.help-input {
  width: 267px;
  height: 18px;
  margin-left: auto;
  padding: 0 2px;
  border: 1px solid #c4c8d4;
  background: #fff;
  font: 11px "Liberation Sans", Arial, sans-serif;
}
.help-input::placeholder {
  color: #6d6d6d;
  opacity: 1;
}
.help-buttons {
  display: flex;
  height: 18px;
  border: 1px solid #8f949f;
  border-radius: 3px;
  background: #f0f0f2;
}
.help-btn {
  display: flex;
  align-items: center;
  justify-content: center;
  width: 18px;
  border-left: 1px solid #8f949f;
}
.help-wide {
  width: 27px;
  border-left: none;
}
.doc-buttons {
  display: flex;
  gap: 1px;
  margin-left: 4px;
}
.doc-btn {
  display: flex;
  align-items: center;
  justify-content: center;
  width: 18px;
  height: 18px;
  border: 1px solid #9fb6cf;
  background: #dbe7f5;
}

/* toolbars */
.toolbars {
  display: flex;
  gap: 4px;
  height: 29px;
  padding: 1px 2px;
}
.toolbar {
  display: flex;
  align-items: center;
  height: 27px;
  padding-right: 3px;
  border-right: 1px solid #a0a0a0;
  border-bottom: 1px solid #a0a0a0;
}
.grip {
  flex: none;
  width: 7px;
  margin: 2px 1px;
  align-self: stretch;
  border: solid #b0b0b0;
  border-width: 0 1px;
  background: linear-gradient(to right, #fff 1px, #f0f0f0 1px, #f0f0f0 2px, #b0b0b0 2px, #b0b0b0 3px, #fff 3px, #fff 4px, #f0f0f0 4px);
}
.tool {
  display: flex;
  align-items: center;
  justify-content: center;
  width: 23px;
  height: 23px;
}
.tool:hover,
.pbtn:hover {
  background: #dce6f4;
}
.drop {
  width: 13px;
  height: 23px;
  display: flex;
  align-items: center;
  justify-content: center;
}
.drop::after {
  content: "";
  border: 3px solid transparent;
  border-top-color: #1c2a6a;
  border-bottom: none;
}
.drop:disabled::after {
  border-top-color: #b0b0b0;
}
.sep {
  flex: none;
  width: 1px;
  height: 20px;
  background: #6d6d6d;
}
.toolbar .sep {
  margin: 0 3px 0 2px;
}

/* drop-downs */
.combo {
  position: relative;
  display: flex;
  flex: 1;
  align-items: center;
  min-width: 0;
  height: 23px;
  border: 1px solid #dfe3e9;
  border-top-color: #abadb3;
  background: #fff;
}
.combo::after {
  content: "";
  position: absolute;
  right: 4px;
  border: 4px solid transparent;
  border-top-color: #000;
  border-bottom: none;
  pointer-events: none;
}
.combo select {
  flex: 1;
  min-width: 0;
  height: 100%;
  padding: 0 19px 0 3px;
  border: none;
  background: none;
  appearance: none;
}
.combo-workspace {
  flex: none;
  width: 175px;
  height: 21px;
  margin-left: 2px;
}
.combo-workspace select {
  padding-left: 7px;
}
.indent select {
  padding-left: 18px;
}
.combo-layer {
  padding-left: 3px;
}
.combo-layer select {
  padding-left: 6px;
}
.combo-off {
  border-color: #b5b5bb;
  background: #f0f0f0;
}
.combo-off::after {
  border-top-color: #a8a8a8;
}

/* drawing area */
.workspace {
  flex: 1;
  display: flex;
  min-height: 0;
}
.document {
  flex: 1;
  display: flex;
  flex-direction: column;
  min-width: 0;
  border-right: 1px solid #d0d0d0;
}
.drawing {
  flex: 1;
  display: grid;
  grid-template-columns: 1fr 1fr;
  grid-template-rows: 1fr 1fr;
  gap: 1px;
  margin-right: 2px;
  padding: 1px;
  border: solid #6b6b6b;
  border-width: 2px 0 1px 2px;
  background: #000;
}
.viewport {
  border: 1px solid #fff;
}
.viewport.active {
  outline: 1px solid #fff;
}
.viewport svg {
  width: 100%;
  height: 100%;
  fill: none;
  stroke: #fff;
  shape-rendering: crispEdges;
}
.viewport .arrow {
  fill: #444;
}
.viewport .origin {
  shape-rendering: auto;
}
.viewport text {
  fill: #fff;
  stroke: none;
  font: 300 14px Lato, sans-serif;
  text-anchor: middle;
}

/* layout tabs */
.tabs {
  display: flex;
  height: 19px;
  padding-left: 3px;
  margin-right: 2px;
  border-bottom: 2px solid #fff;
}
.tab-nav {
  display: flex;
  align-items: center;
  justify-content: center;
  width: 15px;
  border-right: 1px solid #a0a0a0;
  fill: #666;
  stroke: #666;
  stroke-width: 1px;
}
.tab {
  position: relative;
  height: 17px;
  margin-left: 2px;
  padding: 2px 7px 0;
}
.tab::after {
  content: "";
  position: absolute;
  top: 0;
  right: -2px;
  height: 16px;
  border-right: 1px solid #444;
  transform: skewX(-22deg);
}
.tab-active {
  padding: 2px 10px 0;
  margin-left: 1px;
  margin-right: -3px;
  background: #000;
  color: #fff;
  clip-path: polygon(0 0, 100% 0, calc(100% - 6px) 100%, 7px 100%);
}

/* command line */
.command {
  display: flex;
  flex: none;
  height: 69px;
  margin-top: 4px;
  padding: 9px 7px 1px 5px;
  border-top: 2px solid #7d7d7d;
}
.command .grip {
  margin: 0 3px 2px 0;
}
.command-box {
  flex: 1;
  display: flex;
  flex-direction: column;
  border: solid #6d6d6d;
  border-width: 2px 0 0 2px;
  background: #fff;
  font: 13px/16px "Liberation Mono", "Courier New", monospace;
}
.history {
  display: flex;
  flex: none;
  height: 36px;
  border-bottom: 1px solid #a0a0a0;
}
.history-text {
  flex: 1;
  padding-left: 1px;
}
.vscroll {
  display: flex;
  flex-direction: column;
  justify-content: space-around;
  align-items: center;
  width: 17px;
  background: #f0f0f0;
}
.hscroll {
  display: flex;
  align-items: center;
  justify-content: space-between;
  width: 68px;
  margin-right: 18px;
  padding: 0 7px;
  background: #f0f0f0;
}
.vscroll svg,
.hscroll svg {
  fill: #444;
}
.thumb {
  width: 15px;
  height: 15px;
  margin-right: 14px;
  border: 1px solid #979797;
  border-radius: 2px;
  background: linear-gradient(#f3f3f3 45%, #d6d6d6 50%);
}
.prompt {
  flex: 1;
  display: flex;
  background: linear-gradient(to left, #f0f0f0 18px, #fff 18px);
}
.prompt label {
  padding: 2px 0 0 1px;
}
.prompt input {
  flex: 1;
  min-width: 0;
  height: 18px;
  padding: 0;
  border: none;
  outline: none;
  background: none;
}

/* tool palette */
.palette {
  flex: none;
  width: 234px;
  margin-left: 4px;
  padding: 6px 0 0 1px;
  border-left: 2px solid #6f6f6f;
  background: #ebebeb;
}
.palette-head {
  display: flex;
  align-items: center;
  gap: 4px;
  height: 11px;
  margin-bottom: 3px;
  padding: 0 7px;
}
.palette-grip {
  flex: 1;
  height: 6px;
  border: 1px solid #a5a5a5;
  border-left: none;
  background: #fff;
}
.panels {
  border: 1px solid #a8a8b6;
}
.panel {
  display: flex;
  padding: 3px 4px 3px 0;
  border-bottom: 1px solid #a8a8b6;
  background: linear-gradient(to right, #d7d7d7 22px, #ebebeb 22px);
}
.panel:last-child {
  padding-bottom: 5px;
  border-bottom: none;
}
.panel-icon {
  width: 24px;
  height: 24px;
  margin-left: 3px;
}
.panel-rows {
  flex: 1;
  min-width: 0;
  padding-left: 27px;
}
.row {
  display: flex;
  align-items: center;
  justify-content: flex-end;
  height: 25px;
}
.pbtn {
  flex: none;
  display: flex;
  align-items: center;
  justify-content: center;
  width: 22px;
  height: 22px;
}
.more {
  display: flex;
  flex-direction: column;
  align-items: center;
  width: 7px;
  padding-top: 15px;
}
.more::before {
  content: "";
  width: 6px;
  border-top: 1px solid #000;
  margin-bottom: 1px;
}
.more::after {
  content: "";
  border: 3px solid transparent;
  border-top-color: #000;
  border-bottom: none;
}
.node {
  fill: #1b6fc0;
}
.back-btn {
  width: 14px;
  margin: 0 5px 0 -19px;
}

/* status bar */
.statusbar {
  display: flex;
  align-items: center;
  height: 25px;
  padding: 3px 4px 1px 5px;
  border-top: 1px solid #a0a0a0;
  background: #f0eceb;
  box-shadow: inset 0 1px #fff, inset 0 2px #a0a0a0;
}
.coords {
  width: 126px;
  height: 18px;
  padding: 2px 1px;
  border: 1px solid #a8a8a8;
}
.modes {
  display: flex;
  gap: 3px;
  margin-left: 4px;
}
.mode {
  height: 18px;
  padding: 0 1px;
  border: 1px solid #fff;
  border-right-color: #a0a0a0;
  border-bottom-color: #a0a0a0;
}
.mode.on {
  border-color: #000 #fff #fff #000;
}
.status-right {
  display: flex;
  align-items: center;
  margin-left: auto;
}
.scale-btn {
  display: flex;
  align-items: center;
  gap: 4px;
  margin: 0 8px;
}
.scale-btn::after {
  content: "";
  border: 4px solid transparent;
  border-top-color: #000;
  border-bottom: none;
}
.status-right .pbtn {
  width: 24px;
  height: 18px;
}
.locks {
  display: flex;
  border: 1px solid #a0a0a0;
  border-right-color: #fff;
  border-bottom-color: #fff;
}
.status-right .pbtn:last-child {
  width: 18px;
}
.status-right .locks .pbtn {
  width: 21px;
}
.drop-status {
  width: 20px;
}
.drop-status::after {
  border-width: 4px 4px 0;
  border-top-color: #000;
}

/* taskbar */
.taskbar {
  display: flex;
  align-items: center;
  height: 39px;
  border-top: 1px solid #2b4c70;
  background:
    linear-gradient(to bottom, rgba(255, 255, 255, 0.45) 1px, rgba(255, 255, 255, 0.06) 3px, transparent),
    linear-gradient(65deg, #1e6590 0%, #236f9c 13%, #2a86b8 22%, #1f83bd 32%, #2389c0 34%, #3a93cc 37%, #2e88c6 44%, #1f72b5 50%, #3280c3 53%, #2479c0 57%, #1d6bae 61%, #2b78bc 64%, #1f68af 73%, #1a5fa5 77%, #7ba6cf 79%, #17528d 81%, #143f70 90%, #1b4c80 100%);
}
.start {
  margin: 0 13px 0 8px;
}
.task {
  display: flex;
  align-items: center;
  justify-content: center;
  width: 60px;
  height: 38px;
  margin-right: 2px;
  border: 1px solid #bcd9ea;
  border-radius: 3px;
  background: linear-gradient(135deg, #8dbbd4, #3f88b3 60%, #74b2d3);
}
.task-warm {
  background: linear-gradient(135deg, #a5cbdd, #5d9fc4 60%, #7bb8d8);
}
.task-bright {
  background: linear-gradient(135deg, #eef6fa, #a6cde3 50%, #7fb9da);
}
.task-flat {
  border-color: transparent;
  background: none;
}
.tray {
  display: flex;
  align-items: center;
  height: 38px;
  margin-left: auto;
  color: #fff;
  font: 11px/17px "Open Sans", sans-serif;
}
.lang {
  margin-right: 7px;
}
.tray-btn {
  display: flex;
  align-items: center;
  justify-content: center;
  margin-right: 8px;
}
.tray-top {
  align-self: flex-start;
  padding-top: 7px;
}
.clock {
  display: flex;
  flex-direction: column;
  align-items: center;
  margin: 0 12px 0 10px;
}
.show-desktop {
  width: 14px;
  height: 38px;
  border: 1px solid #0f2c50;
  border-right: none;
  background: linear-gradient(135deg, #7e9cc0, #2a5586);
}
```
